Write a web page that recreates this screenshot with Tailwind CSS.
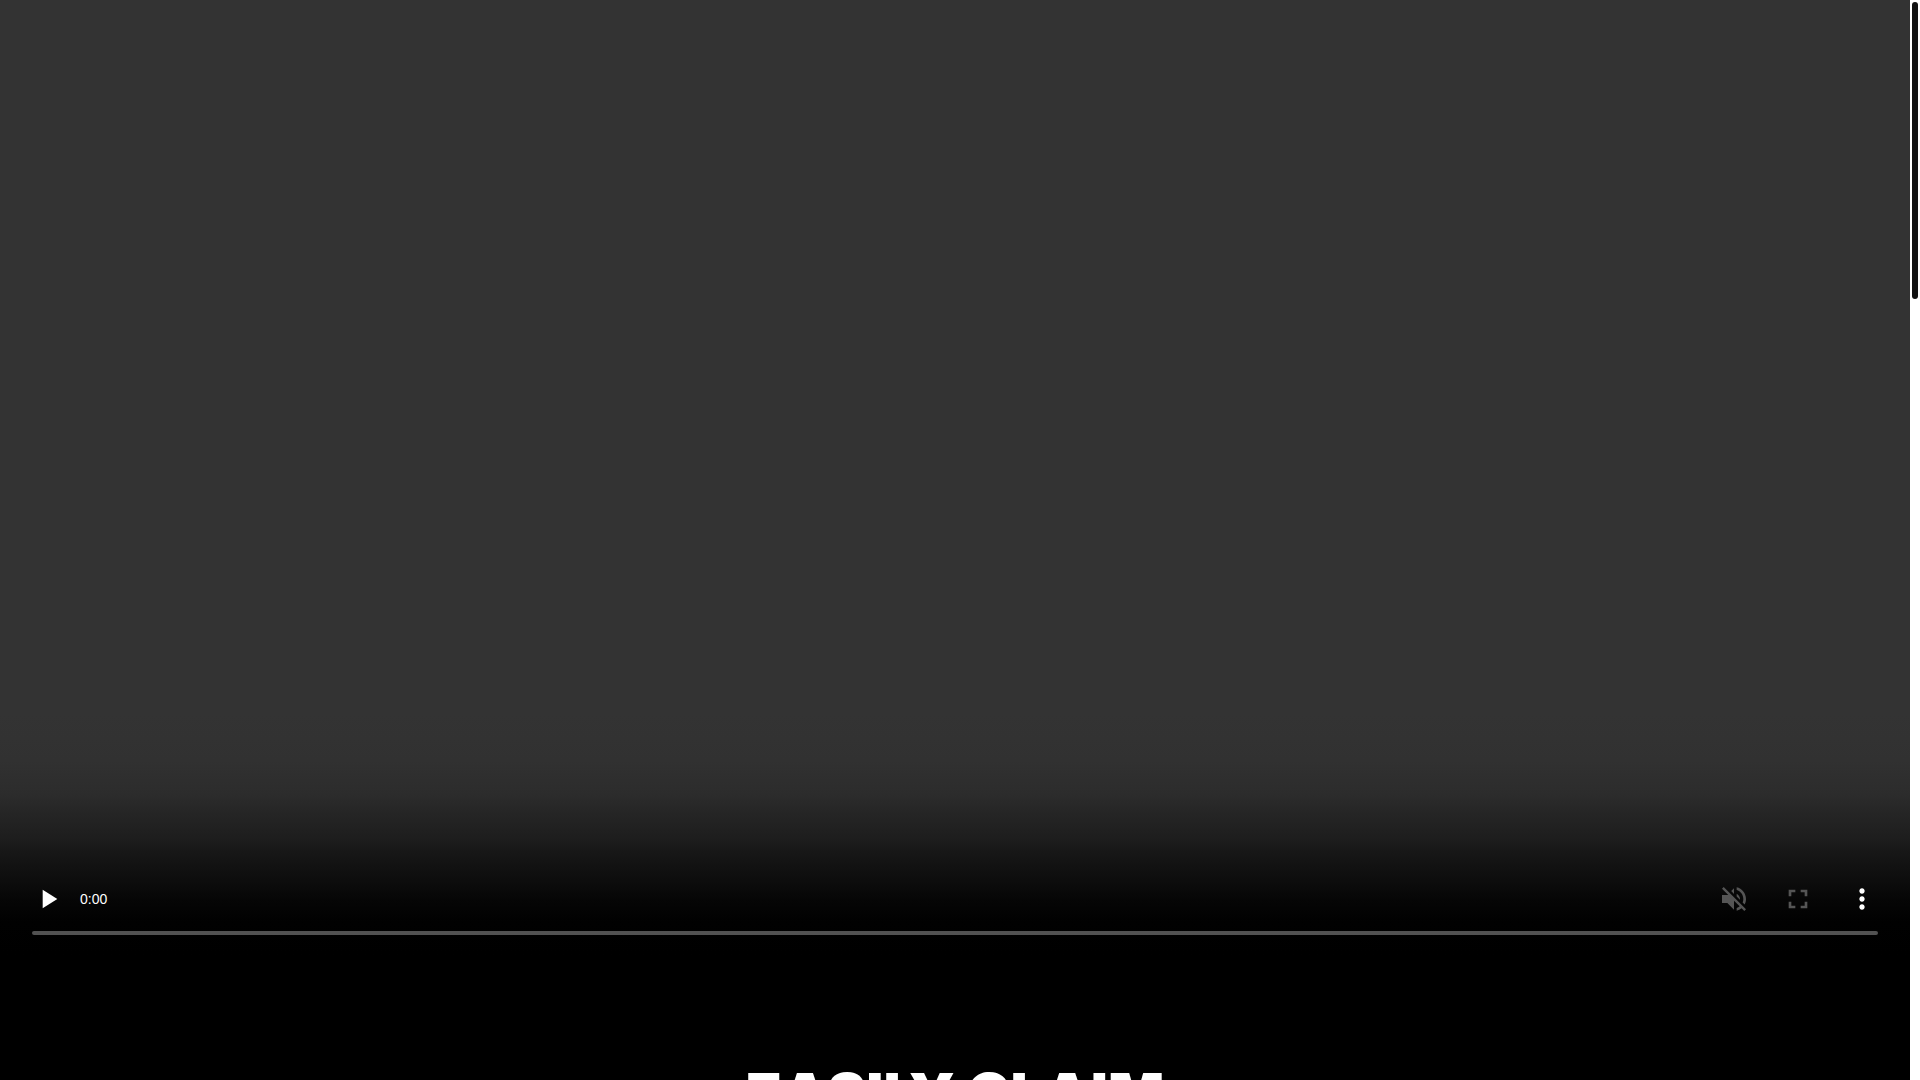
<!DOCTYPE html>
<html lang="en">
<head>
  <meta charset="UTF-8" />
  <meta name="viewport" content="width=device-width, initial-scale=1.0"/>
  <title>Easily Claim</title>
  <script src="https://cdn.jsdelivr.net/npm/@tailwindcss/browser@4"></script>
</head>
<body class="h-screen overflow-hidden bg-black flex text-white">

  <main class="flex-1 min-w-0">
    <!-- video player, 2:1 -->
    <section aria-label="Video player" class="aspect-[2/1] bg-[#333] flex flex-col justify-end">
      <div class="h-60 px-8 pb-5 flex flex-col justify-end bg-[linear-gradient(to_bottom,#333_0%,#313131_19%,#2c2c2c_33%,#262626_40%,#1d1d1d_52%,#181818_56%,#121212_63%,#0d0d0d_69%,#060606_77%,#010101_86%,#000_100%)]">
        <div class="flex items-center justify-between h-12">
          <div class="flex items-center">
            <button type="button" aria-label="Play" class="w-8 h-12 flex items-center justify-center">
              <svg class="w-8 h-8" viewBox="0 0 24 24" fill="currentColor"><path d="M8 5v14l11-7z"/></svg>
            </button>
            <span class="pl-4 text-sm font-['Liberation_Sans',sans-serif]">0:00</span>
          </div>
          <div class="flex items-center gap-8">
            <button type="button" aria-label="Unmute" disabled class="w-8 h-12 flex items-center justify-center text-[#555]">
              <svg class="w-8 h-8" viewBox="0 0 24 24" fill="currentColor"><path d="M16.5 12c0-1.77-1.02-3.29-2.5-4.03v2.21l2.45 2.45c.03-.2.05-.41.05-.63zm2.5 0c0 .94-.2 1.82-.54 2.64l1.51 1.51C20.63 14.91 21 13.5 21 12c0-4.28-2.99-7.86-7-8.77v2.06c2.89.86 5 3.54 5 6.71zM4.27 3L3 4.27 7.73 9H3v6h4l5 5v-6.73l4.25 4.25c-.67.52-1.42.93-2.25 1.18v2.06c1.38-.31 2.63-.95 3.69-1.81L19.73 21 21 19.73l-9-9L4.27 3zM12 4L9.91 6.09 12 8.18V4z"/></svg>
            </button>
            <button type="button" aria-label="Full screen" disabled class="w-8 h-12 flex items-center justify-center text-[#555]">
              <svg class="w-8 h-8" viewBox="0 0 24 24" fill="currentColor"><path d="M7 14H5v5h5v-2H7v-3zm-2-4h2V7h3V5H5v5zm12 7h-3v2h5v-5h-2v3zM14 5v2h3v3h2V5h-5z"/></svg>
            </button>
            <button type="button" aria-label="More options" class="w-8 h-12 flex items-center justify-center">
              <svg class="w-8 h-8" viewBox="0 0 24 24" fill="currentColor"><path d="M12 8c1.1 0 2-.9 2-2s-.9-2-2-2-2 .9-2 2 .9 2 2 2zm0 2c-1.1 0-2 .9-2 2s.9 2 2 2 2-.9 2-2-.9-2-2-2zm0 6c-1.1 0-2 .9-2 2s.9 2 2 2 2-.9 2-2-.9-2-2-2z"/></svg>
            </button>
          </div>
        </div>
        <input type="range" min="0" max="100" value="0" disabled aria-label="Seek" class="block appearance-none w-full h-1 mt-2 rounded-full bg-[#525252] [&::-webkit-slider-thumb]:appearance-none" />
      </div>
    </section>

    <section class="pt-27 text-center">
      <h1 class="text-[59px] leading-[64px] font-black font-['Inter','Liberation_Sans',sans-serif]">EASILY CLAIM</h1>
    </section>
  </main>

  <!-- scrollbar -->
  <div class="w-[10px] shrink-0 bg-white p-[2px]">
    <div class="h-[297px] rounded-full bg-[#111]"></div>
  </div>

</body>
</html>
